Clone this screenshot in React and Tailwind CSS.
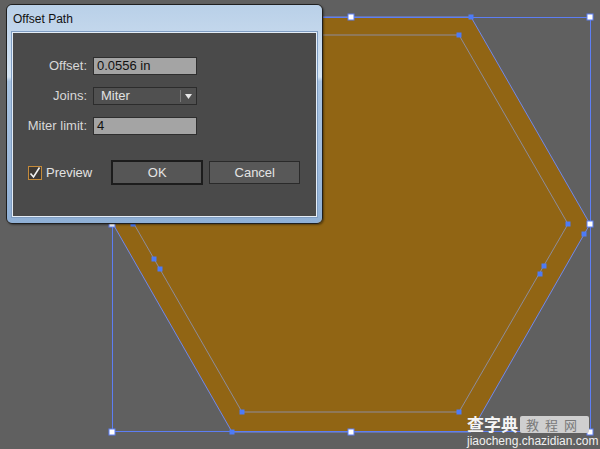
import React from "react";

const font = { fontFamily: '"Liberation Sans", Arial, sans-serif' };

function Canvas() {
  const outer = "231,17 471,17 590,224 471,432 232,432 113,224";
  const inner = "243,35 459,35 568,224 459,412 242,412 134,224";
  const handles = [
    [112, 17], [351, 17], [590, 17], [590, 224], [590, 432], [351, 432], [112, 432], [112, 224],
  ];
  const anchors = [
    [471, 17], [459, 35], [568, 224], [584, 234], [544, 266], [540, 274],
    [459, 412], [242, 412], [232, 432], [133, 224], [154, 259], [160, 269],
  ];
  return (
    <svg className="absolute inset-0" width="600" height="449" viewBox="0 0 600 449">
      <polygon points={outer} fill="#916514" stroke="#6f88ee" strokeWidth="1" />
      <polygon points={inner} fill="none" stroke="#8d8c9c" strokeWidth="1" />
      <rect x="112.5" y="17.5" width="478" height="414" fill="none" stroke="#5d7ef3" strokeWidth="1" />
      {anchors.map(([x, y], i) => (
        <rect key={"a" + i} x={x - 2.5} y={y - 2.5} width="5" height="5" fill="#4d7bf6" />
      ))}
      {handles.map(([x, y], i) => (
        <rect key={"h" + i} x={x - 3} y={y - 3} width="6" height="6" fill="#ffffff" stroke="#5d7ef3" strokeWidth="1" />
      ))}
    </svg>
  );
}

function Row({ label, children }) {
  return (
    <div className="flex items-center h-[18px]">
      <div className="w-[75px] text-right text-[13px] text-[#d8d8d8] pr-[1px]">{label}</div>
      <div className="ml-[5px]">{children}</div>
    </div>
  );
}

function Input({ value }) {
  return (
    <div className="w-[104px] h-[18px] bg-[#a4a4a4] border border-[#2e2e2e] flex items-center pl-[3px] text-[13px] text-[#111]">
      {value}
    </div>
  );
}

function Dialog() {
  return (
    <div className="absolute left-[6px] top-[4px] w-[317px] h-[220px] rounded-[6px] border border-[#1f1f1f] flex flex-col px-[5px] pb-[6px] shadow-[1px_1px_2px_rgba(0,0,0,0.4)]">
      <div className="absolute inset-0 rounded-[5px] bg-[linear-gradient(180deg,#b9d0e8_0%,#c9dbee_20%,#d6e5f3_33%,#a7c2e0_35%,#9fbbdc_70%,#8fb0d6_100%)]" />
      <div className="relative h-[27px] flex items-center pl-[1px] text-[12px] text-[#111]">Offset Path</div>
      <div className="relative flex-1 bg-[#4a4a4a] border border-[#e4edf7] outline outline-1 outline-[#7f9dc2] flex flex-col pt-[24px]">
        <div className="flex flex-col gap-[12px]">
          <Row label="Offset:">
            <Input value="0.0556 in" />
          </Row>
          <Row label="Joins:">
            <div className="w-[104px] h-[18px] bg-[#505050] border border-[#2c2c2c] flex items-center text-[13px] text-[#e2e2e2]">
              <span className="flex-1 pl-[7px]">Miter</span>
              <span className="w-px h-[12px] bg-[#7a7a7a]" />
              <span className="w-[15px] flex justify-center">
                <svg width="7" height="5" viewBox="0 0 7 5">
                  <polygon points="0,0 7,0 3.5,5" fill="#e8e8e8" />
                </svg>
              </span>
            </div>
          </Row>
          <Row label="Miter limit:">
            <Input value="4" />
          </Row>
        </div>
        <div className="flex items-center mt-[25px] pl-[15px]">
          <div className="w-[14px] h-[14px] border border-[#c48a3a] bg-[#3e3a36] flex items-center justify-center">
            <svg width="12" height="12" viewBox="0 0 12 12">
              <path d="M1.5 6.5 L4.5 10 L10.5 0.5" fill="none" stroke="#f2f2f2" strokeWidth="1.6" />
            </svg>
          </div>
          <span className="ml-[4px] text-[13px] text-[#e2e2e2]">Preview</span>
          <div className="ml-[19px] w-[92px] h-[25px] border-2 border-[#1c1c1c] bg-[#565656] flex items-center justify-center text-[13px] text-[#e4e4e4]">
            OK
          </div>
          <div className="ml-[6px] w-[91px] h-[23px] border border-[#2a2a2a] bg-[#585858] flex items-center justify-center text-[13px] text-[#e4e4e4]">
            Cancel
          </div>
        </div>
      </div>
    </div>
  );
}

function Watermark() {
  return (
    <div className="absolute left-[467px] top-[414px] flex flex-col items-start" style={{ fontFamily: '"Liberation Sans", "Noto Sans CJK SC", sans-serif' }}>
      <div className="flex items-center h-[20px]">
        <span className="text-[17px] leading-[20px] font-bold text-[#f4f4f4]" style={{ fontFamily: '"Noto Sans CJK SC", sans-serif' }}>查字典</span>
        <span className="ml-[2px] h-[17px] px-[6px] rounded-[2px] bg-[#cfcfcf] text-[13px] leading-[17px] tracking-[6px] text-[#7a7a7a]" style={{ fontFamily: '"Noto Sans CJK SC", sans-serif' }}>教程网</span>
      </div>
      <div className="text-[12px] leading-[13px] text-[#f0f0f0] mt-[1px]">jiaocheng.chazidian.com</div>
    </div>
  );
}

export default function App() {
  return (
    <div className="relative w-[600px] h-[449px] bg-[#606060] overflow-hidden" style={font}>
      <Canvas />
      <Dialog />
      <Watermark />
    </div>
  );
}
